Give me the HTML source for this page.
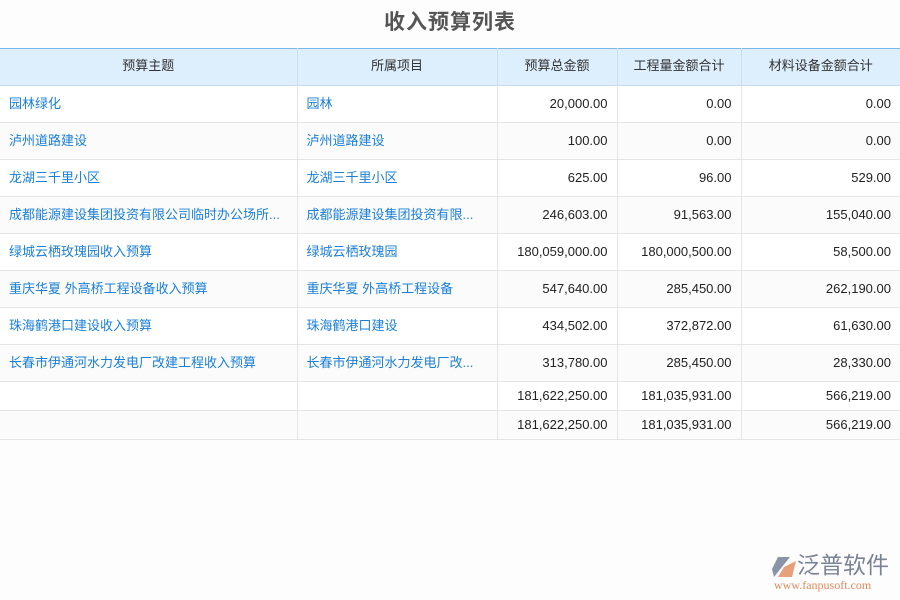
<!DOCTYPE html>
<html><head><meta charset="utf-8"><style>
body{margin:0;width:900px;height:600px;background:#fdfdfd;font-family:"Liberation Sans","Noto Sans CJK SC",sans-serif;position:relative;overflow:hidden}
h1{margin:0;position:absolute;top:9px;left:0;width:900px;text-align:center;font-size:21px;font-weight:bold;color:#555;letter-spacing:1px;line-height:28px}
table{position:absolute;top:48px;left:0;border-collapse:collapse;width:900px;table-layout:fixed;font-size:13px}
th{background:#ddeefc;color:#333;font-weight:normal;height:34px;border-top:1px solid #7ab8e8;border-bottom:1px solid #c9dcec;border-right:1px solid #cfdfee;padding:0 0 2px;line-height:14px}
td{height:35px;border-bottom:1px solid #e6e6e6;border-right:1px solid #e6e6e6;padding:0 9px 1px;white-space:nowrap;overflow:hidden;color:#222;background:#fff;line-height:14px}
tr:nth-child(odd) td{background:#fbfbfb}
td.l{color:#1a7fd6}
td.n{text-align:right}
tr.s td{height:27px}
th:last-child,td:last-child{border-right:none}
.logo{position:absolute;left:770px;top:552px}
</style></head><body>
<h1>收入预算列表</h1>
<table>
<colgroup><col style="width:297px"><col style="width:200px"><col style="width:120px"><col style="width:124px"><col style="width:159px"></colgroup>
<tr><th>预算主题</th><th>所属项目</th><th>预算总金额</th><th>工程量金额合计</th><th>材料设备金额合计</th></tr>
<tr><td class="l">园林绿化</td><td class="l">园林</td><td class="n">20,000.00</td><td class="n">0.00</td><td class="n">0.00</td></tr>
<tr><td class="l">泸州道路建设</td><td class="l">泸州道路建设</td><td class="n">100.00</td><td class="n">0.00</td><td class="n">0.00</td></tr>
<tr><td class="l">龙湖三千里小区</td><td class="l">龙湖三千里小区</td><td class="n">625.00</td><td class="n">96.00</td><td class="n">529.00</td></tr>
<tr><td class="l">成都能源建设集团投资有限公司临时办公场所...</td><td class="l">成都能源建设集团投资有限...</td><td class="n">246,603.00</td><td class="n">91,563.00</td><td class="n">155,040.00</td></tr>
<tr><td class="l">绿城云栖玫瑰园收入预算</td><td class="l">绿城云栖玫瑰园</td><td class="n">180,059,000.00</td><td class="n">180,000,500.00</td><td class="n">58,500.00</td></tr>
<tr><td class="l">重庆华夏 外高桥工程设备收入预算</td><td class="l">重庆华夏 外高桥工程设备</td><td class="n">547,640.00</td><td class="n">285,450.00</td><td class="n">262,190.00</td></tr>
<tr><td class="l">珠海鹤港口建设收入预算</td><td class="l">珠海鹤港口建设</td><td class="n">434,502.00</td><td class="n">372,872.00</td><td class="n">61,630.00</td></tr>
<tr><td class="l">长春市伊通河水力发电厂改建工程收入预算</td><td class="l">长春市伊通河水力发电厂改...</td><td class="n">313,780.00</td><td class="n">285,450.00</td><td class="n">28,330.00</td></tr>
<tr class="s"><td></td><td></td><td class="n">181,622,250.00</td><td class="n">181,035,931.00</td><td class="n">566,219.00</td></tr>
<tr class="s"><td></td><td></td><td class="n">181,622,250.00</td><td class="n">181,035,931.00</td><td class="n">566,219.00</td></tr>
</table>
<div class="logo">
<svg width="28" height="26" style="position:absolute;left:0;top:3px"><path d="M8 2 L20 2 L12 12 L4 22 L2 14 Z" fill="#8a94a8"/><path d="M14 12 L26 6 L22 22 L8 22 Z" fill="#e8a07a"/></svg>
<div style="position:absolute;left:27px;top:-1px;font-size:23px;line-height:28px;color:#7a8396;white-space:nowrap;letter-spacing:0px">泛普软件</div>
<div style="position:absolute;left:4px;top:27px;font-size:12px;line-height:13px;color:#e08a5a;font-family:'Liberation Serif',serif;white-space:nowrap">www.fanpusoft.com</div>
</div>
</body></html>
